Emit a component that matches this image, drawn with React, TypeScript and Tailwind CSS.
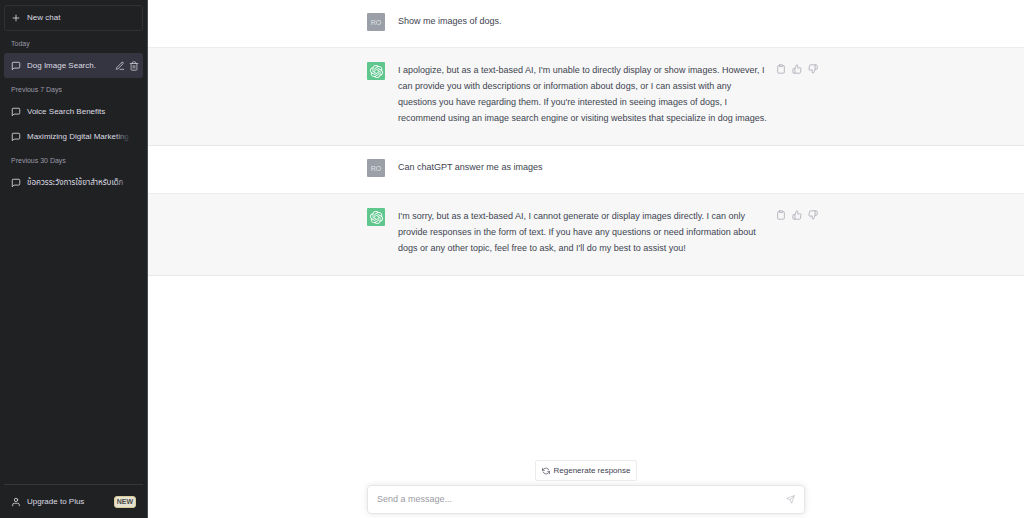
import type { ReactNode } from "react";
import {
  FiClipboard,
  FiEdit3,
  FiMessageSquare,
  FiPlus,
  FiRefreshCw,
  FiSend,
  FiThumbsDown,
  FiThumbsUp,
  FiTrash2,
  FiUser,
} from "react-icons/fi";
import { SiOpenai } from "react-icons/si";

const history = [
  { label: "Today", chats: [{ title: "Dog Image Search.", active: true }] },
  {
    label: "Previous 7 Days",
    chats: [
      { title: "Voice Search Benefits", active: false },
      { title: "Maximizing Digital Marketing", active: false },
    ],
  },
  {
    label: "Previous 30 Days",
    chats: [{ title: "ข้อควรระวังการใช้ยาสำหรับเด็ก", active: false }],
  },
];

function ChatLink({ title, active }: { title: string; active: boolean }) {
  return (
    <div
      className={
        active
          ? "flex h-[25px] items-center rounded-[3px] bg-[#343541] pl-[7px] pr-1"
          : "flex h-[25px] items-center rounded-[3px] pl-[7px] pr-3"
      }
    >
      <a
        href="#"
        aria-current={active ? "page" : undefined}
        className="flex min-w-0 flex-1 items-center gap-[6px] text-[#dcdce2]"
      >
        <FiMessageSquare className="size-[10px] shrink-0" />
        <span className="relative flex-1 overflow-hidden whitespace-nowrap leading-4">
          {title}
          {!active && (
            <span className="absolute inset-y-0 right-0 w-4 bg-linear-to-l from-[#202123] to-transparent" />
          )}
        </span>
      </a>
      {active && (
        <div className="flex gap-1 text-[#c4c4cc]">
          <button type="button" aria-label="Rename chat">
            <FiEdit3 className="size-[10px]" />
          </button>
          <button type="button" aria-label="Delete chat">
            <FiTrash2 className="size-[10px]" />
          </button>
        </div>
      )}
    </div>
  );
}

function Sidebar() {
  return (
    <aside className="flex w-[148px] shrink-0 flex-col border-r border-[#4a4b4f] bg-[#202123] px-1 text-[8px] text-[#dcdce2]">
      <button
        type="button"
        className="mt-[5px] flex h-[26px] items-center gap-[6px] rounded-[3px] border border-[#303134] px-[6px]"
      >
        <FiPlus className="size-[10px]" />
        New chat
      </button>
      <nav className="mt-[1px] flex-1">
        {history.map((group) => (
          <section key={group.label}>
            <h2 className="h-[21px] px-[7px] pt-[7px] text-[7px] leading-[10px] text-[#9a9aa8]">
              {group.label}
            </h2>
            {group.chats.map((chat) => (
              <ChatLink key={chat.title} {...chat} />
            ))}
          </section>
        ))}
      </nav>
      <a
        href="#"
        className="flex h-[34px] items-center gap-[6px] border-t border-[#36373a] px-[7px]"
      >
        <FiUser className="size-[10px]" />
        <span className="flex-1">Upgrade to Plus</span>
        <span className="rounded-[3px] border border-[#d8cc96] bg-[#e6e2d2] px-[2px] text-[7px] font-bold leading-[10px] text-[#4c4c48]">
          NEW
        </span>
      </a>
    </aside>
  );
}

function UserMessage({ children }: { children: ReactNode }) {
  return (
    <div className="border-b border-[#ececee] pb-4 pt-[13px]">
      <div className="mx-auto flex h-[18px] max-w-[438px] gap-[13px]">
        <div className="flex size-[18px] items-center justify-center rounded-[1px] bg-[#9b9fa8] text-[7px] leading-none text-[#dfe1e5]">
          RO
        </div>
        <p className="flex-1 leading-4">{children}</p>
      </div>
    </div>
  );
}

function BotMessage({ children }: { children: ReactNode }) {
  return (
    <div className="border-b border-[#e8e8ea] bg-[#f7f7f8] pb-[19px] pt-[14px]">
      <div className="mx-auto flex max-w-[438px] gap-[13px]">
        <div className="flex size-[18px] shrink-0 items-center justify-center rounded-[1px] bg-[#5fc78d] text-white">
          <SiOpenai className="size-[13px]" />
        </div>
        <p className="w-[372px] shrink-0 leading-4">{children}</p>
        <div className="-ml-[7px] flex h-[14px] shrink-0 items-center gap-[6px] text-[#acacb6]">
          <button type="button" aria-label="Copy">
            <FiClipboard className="size-[10px]" />
          </button>
          <button type="button" aria-label="Good response">
            <FiThumbsUp className="size-[10px]" />
          </button>
          <button type="button" aria-label="Bad response">
            <FiThumbsDown className="size-[10px]" />
          </button>
        </div>
      </div>
    </div>
  );
}

export default function App() {
  return (
    <div className="flex h-screen bg-white font-['Liberation_Sans','Noto_Sans_Thai','Noto_Sans',sans-serif]">
      <Sidebar />
      <main className="flex min-w-0 flex-1 flex-col text-[9px] text-[#40444f]">
        <div className="flex-1 overflow-hidden">
          <UserMessage>Show me images of dogs.</UserMessage>
          <BotMessage>
            I apologize, but as a text-based AI, I'm unable to directly display or show images. However, I
            <br />
            can provide you with descriptions or information about dogs, or I can assist with any
            <br />
            questions you have regarding them. If you're interested in seeing images of dogs, I
            <br />
            recommend using an image search engine or visiting websites that specialize in dog images.
          </BotMessage>
          <UserMessage>Can chatGPT answer me as images</UserMessage>
          <BotMessage>
            I'm sorry, but as a text-based AI, I cannot generate or display images directly. I can only
            <br />
            provide responses in the form of text. If you have any questions or need information about
            <br />
            dogs or any other topic, feel free to ask, and I'll do my best to assist you!
          </BotMessage>
        </div>
        <form className="mx-auto flex w-full max-w-[438px] flex-col items-center gap-1 pb-1">
          <button
            type="button"
            className="flex h-[21px] items-center gap-1 rounded-[2px] border border-[#ececef] px-[6px] text-[8px] text-[#40414f]"
          >
            <FiRefreshCw className="size-2 -scale-x-100" />
            Regenerate response
          </button>
          <div className="flex h-[29px] w-full items-center rounded-[4px] border border-[#e6e6e8] bg-white px-[9px] shadow-[0_0_6px_rgba(0,0,0,0.10)]">
            <input
              type="text"
              aria-label="Message"
              placeholder="Send a message..."
              className="min-w-0 flex-1 outline-none placeholder:text-[#9a9ba3]"
            />
            <button type="submit" aria-label="Send" className="text-[#c3c3c9]">
              <FiSend className="size-[9px]" />
            </button>
          </div>
        </form>
      </main>
    </div>
  );
}
